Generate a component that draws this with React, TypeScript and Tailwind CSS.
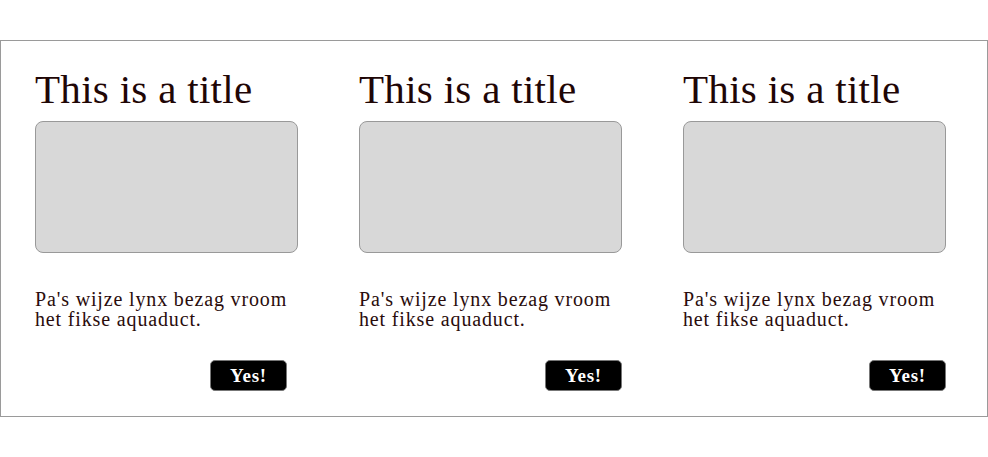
const CARDS = [
  { title: 'This is a title', body: "Pa's wijze lynx bezag vroom het fikse aquaduct.", btnClass: 'mr-[11px]' },
  { title: 'This is a title', body: "Pa's wijze lynx bezag vroom het fikse aquaduct.", btnClass: '' },
  { title: 'This is a title', body: "Pa's wijze lynx bezag vroom het fikse aquaduct.", btnClass: '' },
];

export default function App() {
  return (
    <div className="min-h-screen bg-white pt-[40px] font-['Liberation_Serif',serif]">
      {/* Card strip */}
      <div className="w-[988px] border border-[#9a9a9a] pl-[34px] pr-[41px] pt-[24px] pb-[25px] flex justify-between">
        {CARDS.map((card, i) => (
          <div key={i} className="w-[263px] flex flex-col">
            <h1 className="text-[41px] leading-[48px] text-[#1f0606] tracking-[0.3px]">{card.title}</h1>
            <div className="mt-[8px] h-[132px] rounded-[8px] border border-[#999999] bg-[#d8d8d8]" />
            <p className="mt-[36px] w-[262px] text-[20px] leading-[20px] text-[#2a0c0c] tracking-[0.85px]">{card.body}</p>
            <button
              className={`mt-[31px] self-end h-[31px] w-[77px] rounded-[5px] border border-[#777] bg-black text-white text-[19px] font-bold tracking-[0.8px] leading-none ${card.btnClass}`}
            >
              Yes!
            </button>
          </div>
        ))}
      </div>
    </div>
  );
}
